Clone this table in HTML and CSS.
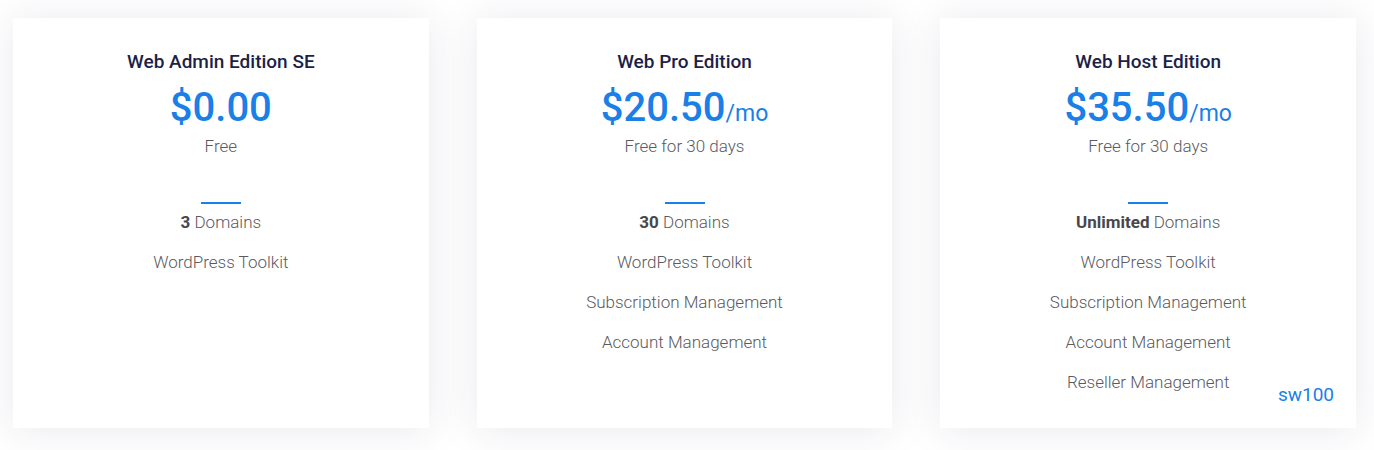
FILE: index.html
```html
<!DOCTYPE html>
<html lang="en">
<head>
  <meta charset="utf-8" />
  <meta name="viewport" content="width=device-width, initial-scale=1.0">
  <title>Editions</title>
  <link rel="stylesheet" href="styles.css">
</head>
<body>
  <div class="plans">
    <!-- Web Admin -->
    <div class="plan">
      <h3 class="plan__name">Web Admin Edition SE</h3>
      <div class="plan__price">$0.00</div>
      <div class="plan__note">Free</div>
      <div class="plan__line"></div>
      <ul class="plan__features">
        <li><b>3</b> Domains</li>
        <li>WordPress Toolkit</li>
      </ul>
    </div>

    <!-- Web Pro -->
    <div class="plan">
      <h3 class="plan__name">Web Pro Edition</h3>
      <div class="plan__price">$20.50<span>/mo</span></div>
      <div class="plan__note">Free for 30 days</div>
      <div class="plan__line"></div>
      <ul class="plan__features">
        <li><b>30</b> Domains</li>
        <li>WordPress Toolkit</li>
        <li>Subscription Management</li>
        <li>Account Management</li>
      </ul>
    </div>

    <!-- Web Host -->
    <div class="plan">
      <h3 class="plan__name">Web Host Edition</h3>
      <div class="plan__price">$35.50<span>/mo</span></div>
      <div class="plan__note">Free for 30 days</div>
      <div class="plan__line"></div>
      <ul class="plan__features">
        <li><b>Unlimited</b> Domains</li>
        <li>WordPress Toolkit</li>
        <li>Subscription Management</li>
        <li>Account Management</li>
        <li>Reseller Management</li>
      </ul>
      <span class="plan__tag">sw100</span>
    </div>
  </div>
</body>
</html>
```

FILE: styles.css
```css
/* ===================== RESET ===================== */
*, *::before, *::after {
  margin: 0;
  padding: 0;
  box-sizing: border-box;
}

:root {
  --blue: #1a7fe6;
  --ink: #1c1f48;
  --grey: #5a5a5f;
}

html, body {
  height: 100%;
}

body {
  background: #fff;
  font-family: Roboto, "Noto Sans", sans-serif;
  color: var(--grey);
}

/* ===================== CARDS ===================== */
.plans {
  display: flex;
  gap: 48px;
  padding: 18px 18px 22px 13px;
}

.plan {
  position: relative;
  flex: 1;
  height: 410px;
  background: #fff;
  padding-top: 31px;
  text-align: center;
  box-shadow: 0 2px 40px rgba(40, 30, 80, 0.1);
}

.plan__name {
  font-size: 19px;
  font-weight: 500;
  line-height: 26px;
  color: var(--ink);
}

.plan__price {
  margin-top: 9px;
  font-size: 40px;
  font-weight: 500;
  line-height: 48px;
  color: var(--blue);
}
.plan__price span {
  font-size: 23px;
  font-weight: 400;
  line-height: 1;
}

.plan__note {
  margin-top: 2px;
  font-size: 17px;
  font-weight: 300;
  line-height: 24px;
}

.plan__line {
  width: 40px;
  height: 2px;
  margin: 44px auto 6px;
  background: var(--blue);
}

.plan__features {
  list-style: none;
  display: flex;
  flex-direction: column;
  gap: 16px;
  font-size: 17px;
  font-weight: 300;
  line-height: 24px;
}
.plan__features b {
  font-weight: 700;
  color: #47474c;
}

/* etiqueta en la esquina */
.plan__tag {
  position: absolute;
  right: 22px;
  bottom: 22px;
  font-size: 19px;
  line-height: 22px;
  color: var(--blue);
}
```
